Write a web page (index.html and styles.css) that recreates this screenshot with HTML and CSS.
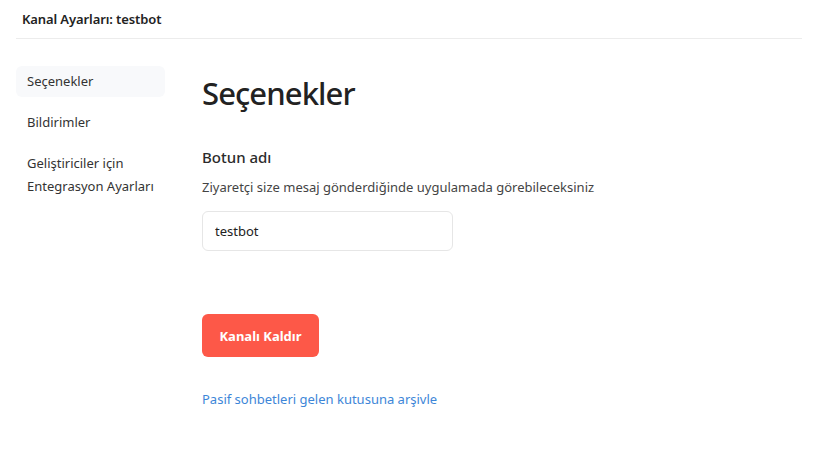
FILE: index.html
```html
<!DOCTYPE html>
<html lang="tr">
<head>
<meta charset="utf-8">
<link rel="stylesheet" href="styles.css">
</head>
<body>
<div class="page">
  <header class="topbar">
    <h1 class="title">Kanal Ayarları: testbot</h1>
  </header>
  <div class="layout">
    <nav class="sidebar">
      <a class="nav-item active">Seçenekler</a>
      <a class="nav-item">Bildirimler</a>
      <a class="nav-item">Geliştiriciler için Entegrasyon Ayarları</a>
    </nav>
    <main class="content">
      <h2 class="heading">Seçenekler</h2>
      <section class="field">
        <h3 class="field-label">Botun adı</h3>
        <p class="field-help">Ziyaretçi size mesaj gönderdiğinde uygulamada görebileceksiniz</p>
        <input class="text-input" type="text" value="testbot">
      </section>
      <button class="danger-btn">Kanalı Kaldır</button>
      <a class="link">Pasif sohbetleri gelen kutusuna arşivle</a>
    </main>
  </div>
</div>
</body>
</html>
```
FILE: styles.css
```css
* { box-sizing: border-box; }
html, body { margin: 0; padding: 0; background: #fff; }
body {
  font-family: "Noto Sans", "Open Sans", sans-serif;
  color: #2b2b2b;
  font-size: 13px;
}
.page { padding: 0 27px 0 16px; }
.topbar {
  height: 39px;
  border-bottom: 1px solid #ececec;
  display: flex;
  align-items: center;
  padding-left: 6px;
}
.title {
  margin: 0;
  font-size: 13px;
  font-weight: 600;
  color: #222;
  letter-spacing: -0.1px;
}
.layout {
  display: flex;
  padding-top: 27px;
}
.sidebar {
  width: 149px;
  flex-shrink: 0;
  display: flex;
  flex-direction: column;
  gap: 10px;
}
.nav-item {
  display: block;
  padding: 4px 11px;
  line-height: 23px;
  font-size: 13px;
  color: #333;
  border-radius: 6px;
}
.nav-item.active { background: #f8f9fb; }
.content {
  padding-left: 37px;
  margin-top: -1px;
  display: flex;
  flex-direction: column;
  align-items: flex-start;
}
.heading {
  margin: 6px 0 0;
  font-size: 31px;
  font-weight: 500;
  line-height: 44px;
  letter-spacing: -0.9px;
  color: #222;
}
.field { margin-top: 32px; }
.field-label {
  margin: 0;
  font-size: 15px;
  font-weight: 500;
  line-height: 20px;
  color: #2b2b2b;
}
.field-help {
  margin: 11px 0 0;
  font-size: 13px;
  line-height: 18px;
  color: #444;
}
.text-input {
  margin-top: 15px;
  width: 251px;
  height: 40px;
  border: 1px solid #e6e6e6;
  border-radius: 6px;
  padding: 0 12px;
  font-family: inherit;
  font-size: 13px;
  color: #222;
  outline: none;
}
.danger-btn {
  margin-top: 63px;
  width: 117px;
  height: 43px;
  border: none;
  border-radius: 6px;
  background: #fd5848;
  color: #fff;
  font-family: inherit;
  font-weight: 700;
  font-size: 13px;
}
.link {
  margin-top: 33px;
  color: #3d86d8;
  font-size: 13px;
  line-height: 18px;
}
```
